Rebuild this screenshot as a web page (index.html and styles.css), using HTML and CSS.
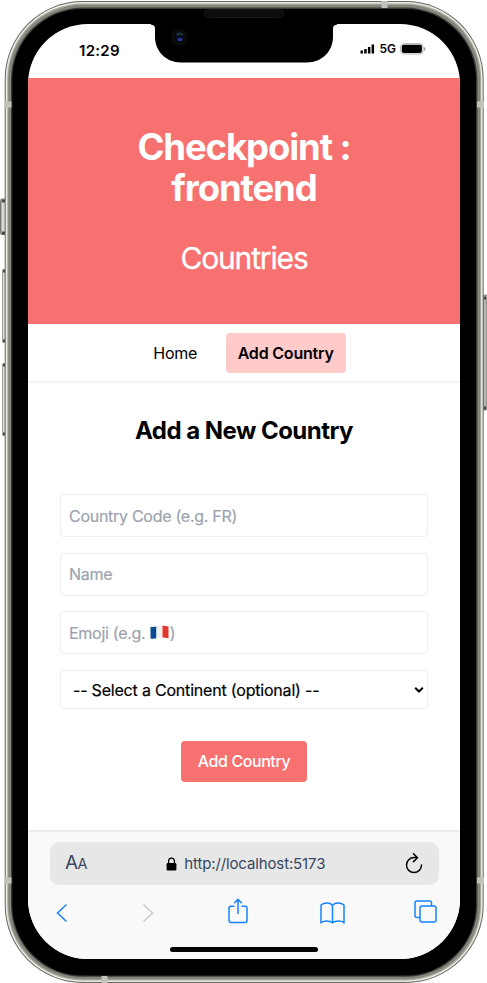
FILE: index.html
```html
<!DOCTYPE html>
<html lang="en">
<head>
<meta charset="utf-8">
<title>Countries</title>
<link rel="stylesheet" href="styles.css">
</head>
<body>
<div class="phone">
  <svg class="frame" width="487" height="983" viewBox="0 0 487 983" aria-hidden="true">
    <defs>
      <linearGradient id="key" x1="0" x2="1" y1="0" y2="0">
        <stop offset="0" stop-color="#777872"/><stop offset=".3" stop-color="#dcdddb"/><stop offset=".75" stop-color="#cfd0cd"/><stop offset="1" stop-color="#555"/>
      </linearGradient>
    </defs>
    <rect x=".5" y="199" width="6" height="35.500" rx="1.500" fill="url(#key)" stroke="#777872"/>
    <rect x="2" y="269" width="4" height="74" rx="1.500" fill="url(#key)"/>
    <rect x="2" y="363" width="4" height="73" rx="1.500" fill="url(#key)"/>
    <path d="M3 271h2m-2 70h2M3 365h2m-2 69h2M2 201h3m-3 32h3" stroke="#444" stroke-width="3"/>
    <rect x="483" y="295" width="4" height="115" rx="1.500" fill="#b5b6b2" stroke="#777872"/>
    <path d="M484 298h2m-2 110h2" stroke="#444" stroke-width="3"/>
    <rect x="4.700" y="1" width="479" height="982" rx="78" fill="#66675f"/>
    <rect x="5.700" y="2" width="477" height="980" rx="77" fill="#e8e9e2"/>
    <rect x="7.300" y="3.500" width="473.800" height="977" rx="75.500" fill="#a9aaa1"/>
    <rect x="8.300" y="4.800" width="471.800" height="974.400" rx="74.500" fill="#84857b"/>
    <rect x="11" y="7.500" width="466.400" height="969.300" rx="72" fill="#3a3b37"/>
    <rect x="12.300" y="9" width="463.700" height="966.500" rx="70.500" fill="#000"/>
    <path d="M4.500 104.500h7M477 104.500h7M4.500 880.500h7M477 880.500h7" stroke="#c2c3bc" stroke-width="6"/>
    <path d="M384.500 1v7M104.500 976v7" stroke="#c2c3bc" stroke-width="6"/>
  </svg>

  <div class="screen">
    <div class="status">
      <span class="clock">12:29</span>
      <div class="signals">
        <svg width="15" height="10" viewBox="0 0 15 10"><path d="M.5 6.500h2.500v3H.5zM4.200 5h2.500v4.500H4.200zM7.900 3h2.500v6.500H7.900zM11.600.5h2.500v9h-2.500z"/></svg>
        <span class="network">5G</span>
        <svg width="26" height="12" viewBox="0 0 26 12"><rect x=".7" y=".7" width="22.300" height="10.300" rx="3" fill="#fff" stroke="#b0b0b0"/><rect x="1.800" y="1.800" width="20.100" height="8.100" rx="1.800"/><path d="M24 4v4q1.400-.7 1.400-2T24 4z" fill="#999"/></svg>
      </div>
    </div>

    <header class="banner">
      <h1>Checkpoint :<br>frontend</h1>
      <p>Countries</p>
    </header>

    <nav class="tabs">
      <a class="tab">Home</a>
      <a class="tab active">Add Country</a>
    </nav>

    <main>
      <h2>Add a New Country</h2>
      <form class="form">
        <div class="field"><span>Country Code (e.g. FR)</span></div>
        <div class="field"><span>Name</span></div>
        <div class="field"><span>Emoji (e.g. </span><svg class="flag" width="19" height="15" viewBox="0 0 19 15"><path d="M.5 1.800Q3.500 2.300 6.500 1.500v11.700q-3 .8-6 .2z" fill="#0b4a94"/><path d="M6.500 1.500Q9.500.6 12.500.8v11.800q-3-.2-6 .6z" fill="#f1f1f1"/><path d="M12.500.8q3-.1 6 .8v11.700q-3-.8-6-.7z" fill="#e1372f"/></svg><span>)</span></div>
        <div class="field select"><span>-- Select a Continent (optional) --</span><svg width="10" height="8" viewBox="0 0 10 8"><path d="M1.200 1.800 5 5.500l3.800-3.700" fill="none" stroke="#000" stroke-width="2"/></svg></div>
        <button class="submit" type="button">Add Country</button>
      </form>
    </main>

    <footer class="browser">
      <div class="address">
        <span class="aa">A<small>A</small></span>
        <div class="url">
          <svg width="11" height="14" viewBox="0 0 11 14"><path d="M2.600 6V4a2.900 2.900 0 0 1 5.800 0v2" fill="none" stroke="#000" stroke-width="1.300"/><rect x=".6" y="6" width="9.800" height="7.600" rx="1.300"/></svg>
          <span>http://localhost:5173</span>
        </div>
        <svg class="reload" width="18" height="22" viewBox="0 0 18 22" fill="none" stroke="#000" stroke-width="1.500"><path d="M11.500 4.600H9a7.500 7.500 0 1 0 7.500 7.500" stroke-linecap="round"/><path d="m8.500.8 3.900 3.900-3.900 3.900" stroke-linecap="round"/></svg>
      </div>
      <div class="tools">
        <svg width="12" height="20" viewBox="0 0 12 20"><path d="M10.500 1.500 1.500 10l9 8.500"/></svg>
        <svg class="muted" width="12" height="20" viewBox="0 0 12 20"><path d="m1.500 1.500 9 8.500-9 8.500"/></svg>
        <svg class="share" width="20" height="26" viewBox="0 0 20 26"><path d="M6.500 8.300H3q-2 0-2 2v12.200q0 2 2 2h14q2 0 2-2V10.300q0-2-2-2h-3.500M10 16V1.500M6.200 5.200 10 1.400l3.800 3.800"/></svg>
        <svg width="25" height="22" viewBox="0 0 25 22"><path d="M12.500 3.200Q10.500 1 6.700 1 3.500 1 1 3v17.500Q3.500 19 6.700 19q3.800 0 5.800 1.800Q14.500 19 18.300 19q3.200 0 5.700 1.500V3q-2.500-2-5.700-2-3.800 0-5.800 2.200v17.300"/></svg>
        <svg class="windows" width="23" height="23" viewBox="0 0 23 23"><rect x="6" y="6" width="16" height="16" rx="2"/><path d="M6 17.500H3q-2 0-2-2V3q0-2 2-2h12.500q2 0 2 2v3"/></svg>
      </div>
      <div class="home-bar"></div>
    </footer>

    <svg class="notch" width="186" height="42" viewBox="0 0 186 42" aria-hidden="true">
      <path d="M0 0h186v.8q-4 0-4 4V13c0 14-11 25.500-26 25.500H30C15 38.500 4 27 4 13V4.800q0-4-4-4z"/>
      <circle cx="28.500" cy="13.500" r="8.500" fill="#0a0b0d"/>
      <circle cx="28.500" cy="13.500" r="4.500" fill="#050a1c"/>
      <path d="M25.500 11q3-3 6 0" fill="none" stroke="#183e3e" stroke-width="1.800"/>
      <ellipse cx="29" cy="15.500" rx="2.600" ry="1.800" fill="#25389a"/>
    </svg>
  </div>
  <div class="speaker"></div>
</div>
</body>
</html>
```
FILE: styles.css
```css
* { box-sizing: border-box; margin: 0; padding: 0; }
body { background: #fff; font-family: Inter, "Liberation Sans", sans-serif; color: #000; overflow: hidden; }
.phone { position: relative; width: 487px; height: 983px; padding: 24px 27px 24px 28px; }
.frame { position: absolute; inset: 0; }
.screen { position: relative; display: flex; flex-direction: column; width: 432px; height: 935px; background: #fff; border-radius: 60px; overflow: hidden; }
.notch { position: absolute; left: 123px; top: 0; }
.speaker { position: absolute; left: 204px; top: 9px; width: 80px; height: 9px; border-radius: 5px; background: #0c0c0c; border: 1px solid #171717; }

.status { display: flex; justify-content: space-between; height: 54px; padding: 17px 34px 0 51px; }
.clock { font-size: 15px; line-height: 19px; font-weight: 600; letter-spacing: 0.300px; }
.signals { display: flex; align-items: center; height: 15px; gap: 4px; }
.network { font-size: 12px; font-weight: 600; line-height: 14px; }

.banner { height: 246px; padding-top: 49px; background: #f87171; color: #fff; text-align: center; }
h1 { font-size: 36.500px; line-height: 41px; font-weight: 700; letter-spacing: -1.100px; }
.banner p { margin-top: 31px; font-size: 30px; line-height: 36px; letter-spacing: -1.150px; -webkit-text-stroke: 0.300px #fff; }

.tabs { display: flex; justify-content: center; gap: 16.500px; height: 59px; padding: 9px 1px 0 0; border-bottom: 2px solid #f3f3f4; }
.tab { height: 40px; padding: 0 12px; border-radius: 4px; font-size: 16px; line-height: 40px; letter-spacing: -0.250px; }
.active { background: #fecaca; font-weight: 600; letter-spacing: -0.200px; }

main { flex: 1; }
h2 { margin-top: 32px; font-size: 24px; line-height: 32px; font-weight: 700; text-align: center; letter-spacing: -0.530px; }
.form { display: flex; flex-direction: column; gap: 15.700px; margin-top: 47px; padding: 0 32px; }
.field { display: flex; align-items: center; height: 43px; padding: 0 8px; border: 1.500px solid #ededee; border-radius: 4px; font-size: 16px; line-height: 24px; letter-spacing: -0.280px; color: #9ca3af; white-space: pre; -webkit-text-stroke: 0.200px currentColor; }
.flag { margin: 0 1px 1px 0; }
.select { justify-content: space-between; height: 39px; padding: 0 3px 0 12px; letter-spacing: -0.200px; color: #000; }
.submit { align-self: center; width: 126px; height: 41px; margin-top: 16px; border: 0; border-radius: 4px; background: #f87171; color: #fff; font: 500 16px/41px Inter, sans-serif; letter-spacing: -0.420px; }

.browser { height: 129px; padding-top: 10px; border-top: 2px solid #ececec; background: #f9f9f9; }
.address { display: flex; align-items: center; justify-content: space-between; height: 43px; margin: 0 21.500px 0 22px; padding: 0 15px; border-radius: 9px; background: #e7e7e7; color: #374763; }
.aa { font-size: 19px; line-height: 24px; letter-spacing: -0.500px; }
.aa small { font-size: 14.500px; }
.url { display: flex; align-items: center; gap: 7px; padding-right: 1px; font-size: 15px; line-height: 24px; letter-spacing: -0.130px; }
.tools { display: flex; align-items: center; height: 26px; margin: 15px 23px 0 28px; fill: none; stroke: #1683ff; stroke-width: 1.500; }
.tools .muted { margin: 0 74px; stroke: #c8c8c8; }
.share { margin: 0 71.500px 4px 0; }
.windows { margin: 0 0 3px 69px; }
.home-bar { width: 148px; height: 5px; margin: 21px auto 0; border-radius: 3px; background: #000; }
```
